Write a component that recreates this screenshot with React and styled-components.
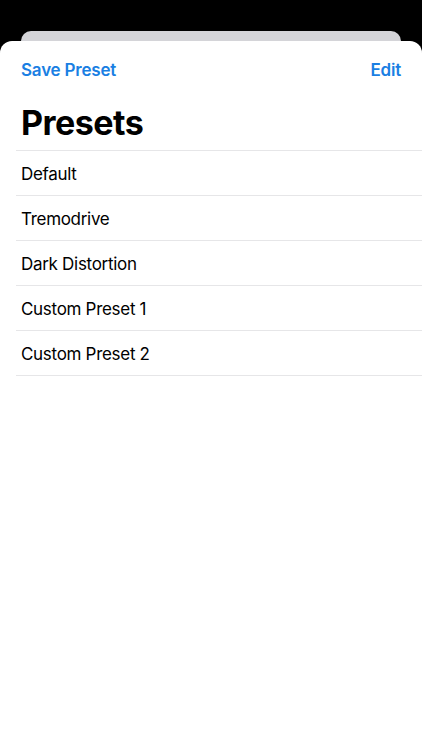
import React from "react";
import styled, { createGlobalStyle } from "styled-components";

const Global = createGlobalStyle`
  html, body { margin:0; padding:0; background:#000; }
  body { font-family: Inter, "Liberation Sans", Arial, sans-serif; }
`;

const Screen = styled.div`
  width:422px;
  height:750px;
  background:#000;
  padding-top:31px;
  box-sizing:border-box;
  display:flex;
  flex-direction:column;
  overflow:hidden;
`;

const BackCard = styled.div`
  height:10px;
  margin:0 21px;
  background:#d4d4d8;
  border-radius:10px 10px 0 0;
  flex-shrink:0;
`;

const Sheet = styled.div`
  flex:1;
  background:#fff;
  border-radius:12px 12px 0 0;
  display:flex;
  flex-direction:column;
`;

const NavBar = styled.div`
  height:58px;
  display:flex;
  align-items:center;
  justify-content:space-between;
  padding:0 21px;
  box-sizing:border-box;
`;

const NavButton = styled.span`
  color:#1a7fe3;
  font-size:17px;
  font-weight:600;
  letter-spacing:-0.2px;
`;

const Title = styled.h1`
  margin:0;
  padding:3px 21px 0;
  font-size:34px;
  font-weight:700;
  color:#000;
  line-height:41px;
  height:51px;
  box-sizing:border-box;
  letter-spacing:-0.5px;
`;

const List = styled.div`
  margin-left:16px;
  border-top:1px solid #e6e6e8;
`;

const Row = styled.div`
  height:45px;
  display:flex;
  align-items:center;
  padding:1px 0 0 5px;
  box-sizing:border-box;
  border-bottom:1px solid #e6e6e8;
  font-size:17px;
  color:#000;
  letter-spacing:-0.3px;
`;

const presets = ["Default", "Tremodrive", "Dark Distortion", "Custom Preset 1", "Custom Preset 2"];

export default function App() {
  return (
    <>
      <Global />
      <Screen>
        <BackCard />
        <Sheet>
          <NavBar>
            <NavButton>Save Preset</NavButton>
            <NavButton>Edit</NavButton>
          </NavBar>
          <Title>Presets</Title>
          <List>
            {presets.map((p) => (
              <Row key={p}>{p}</Row>
            ))}
          </List>
        </Sheet>
      </Screen>
    </>
  );
}
